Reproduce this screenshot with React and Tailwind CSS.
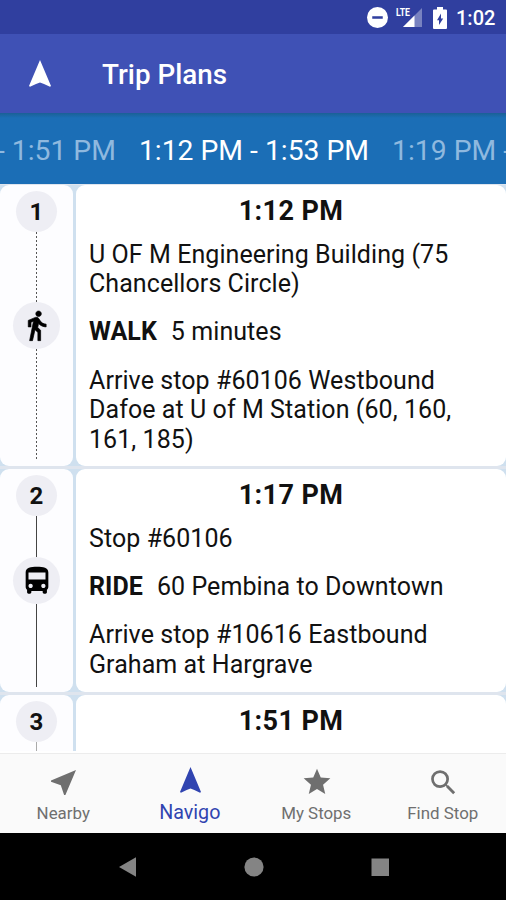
import { MdStar, MdSearch } from "react-icons/md";

function Arrow({ className }) {
  return (
    <svg viewBox="0 0 22 27" className={className} fill="currentColor">
      <path d="M11 0L22 26l-1 .8L15 24 11 22.400 7 24 1 26.800 0 26z" />
    </svg>
  );
}

function NearArrow({ className }) {
  return (
    <svg viewBox="0 0 25 25" className={className} fill="currentColor">
      <path d="M25 0L14.4 25h-1.3L9.8 15.200 0 11.800v-1.300z" />
    </svg>
  );
}

function WalkIcon() {
  return (
    <svg viewBox="0 0 24 24" className="h-[33px] w-[33px]" fill="currentColor" stroke="currentColor" strokeWidth="0.5">
      <path d="M13.5 5.5c1.1 0 2-.9 2-2s-.9-2-2-2-2 .9-2 2 .9 2 2 2zM9.8 8.900L7 23h2.100l1.800-8 2.100 2v6h2v-7.500l-2.100-2 .6-3C14.800 12 16.800 13 19 13v-2c-1.900 0-3.500-1-4.300-2.400l-1-1.600c-.4-.6-1-1-1.700-1-.3 0-.5.1-.8.1L6 8.300V13h2V9.600l1.800-.7z" />
    </svg>
  );
}

function BusIcon() {
  return (
    <svg viewBox="0 0 24 24" className="h-[34px] w-[34px]" fill="currentColor">
      <path d="M4 16c0 .88.39 1.67 1 2.220V20c0 .55.45 1 1 1h1c.55 0 1-.45 1-1v-1h8v1c0 .55.45 1 1 1h1c.55 0 1-.45 1-1v-1.780c.61-.55 1-1.340 1-2.220V6c0-3.500-3.580-4-8-4s-8 .5-8 4v10zm3.500 1c-.83 0-1.500-.67-1.500-1.500S6.670 14 7.500 14s1.500.67 1.500 1.500S8.330 17 7.500 17zm9 0c-.83 0-1.500-.67-1.500-1.500s.67-1.500 1.500-1.500 1.500.67 1.500 1.500-.67 1.500-1.500 1.500zm1.500-6H6V6h12v5z" />
    </svg>
  );
}

function StatusBar() {
  return (
    <div className="flex h-[34px] shrink-0 items-center bg-[#303f9f] pt-px pl-[367px] text-white">
      <svg viewBox="0 0 20 20" className="h-[21px] w-[21px] shrink-0">
        <circle cx="10" cy="10" r="10" fill="#fff" />
        <rect x="5" y="8.8" width="10" height="2.4" fill="#303f9f" />
      </svg>
      <svg viewBox="0 0 27 21" className="ml-[8px] h-[21px] w-[27px] shrink-0 overflow-visible">
        <path d="M26 1v19H7z" fill="#fff" opacity=".35" />
        <path d="M18.500 8.500v11.500H7z" fill="#fff" />
        <rect x="0" y="0" width="14.500" height="10" fill="#303f9f" />
        <text x="0" y="9" fontFamily="Roboto" fontWeight="700" fontSize="11.500" textLength="14" lengthAdjust="spacingAndGlyphs" fill="#fff">LTE</text>
      </svg>
      <svg viewBox="0 0 14 22" className="ml-[10px] h-[22px] w-[14px] shrink-0">
        <path d="M4 0h6v2.500h3a1 1 0 0 1 1 1V21a1 1 0 0 1-1 1H1a1 1 0 0 1-1-1V3.500a1 1 0 0 1 1-1h3z" fill="#fff" />
        <path d="M8 6.500v5h2.200L6 18v-4.800H4z" fill="#303f9f" />
      </svg>
      <span className="ml-[9px] text-[20px] leading-[24px] font-medium whitespace-nowrap">1:02</span>
    </div>
  );
}

function Step({ number, time, icon, dashed, height, children }) {
  const line = dashed
    ? "bg-[repeating-linear-gradient(to_bottom,#555_0_2px,transparent_2px_4px)]"
    : icon
      ? "bg-[#444]"
      : "bg-[#aaa]";
  return (
    <div className={`flex shrink-0 gap-[3px] bg-[#cfe0ef] ${height}`}>
      <div className="flex w-[73px] shrink-0 flex-col items-center rounded-[9px] bg-[#fdfdff] pt-[6px] pb-[5px]">
        <div className="flex h-[41px] w-[41px] shrink-0 items-center justify-center rounded-full bg-[#eeeef4] pt-px text-[24px] font-bold">{number}</div>
        <div className={`w-px flex-1 ${line}`} />
        {icon && (
          <>
            <div className="flex h-[47px] w-[47px] shrink-0 items-center justify-center rounded-full bg-[#eeeef4] text-black">
              {icon}
            </div>
            <div className={`w-px ${line} ${dashed ? "h-[112px]" : "h-[83px]"}`} />
          </>
        )}
      </div>
      <div className="min-w-0 flex-1 rounded-[9px] bg-white pt-[10px] pl-[13px]">
        <h2 className="mb-[12.6px] pr-[13px] text-center text-[27px] leading-[32px] font-bold tracking-[0.4px]">{time}</h2>
        <div className="flex flex-col gap-[19px] text-[25px] leading-[29.4px] tracking-[0.07px] whitespace-nowrap">{children}</div>
      </div>
    </div>
  );
}

function NavItem({ icon, label, active }) {
  return (
    <div className={`flex flex-1 flex-col items-center pt-[12px] ${active ? "text-[#3044b0]" : "text-[#6f6f6f]"}`}>
      <div className="flex h-[32px] items-center justify-center pl-px">{icon}</div>
      <span className={`whitespace-nowrap leading-[24px] ${active ? "mt-[3px] text-[19.7px]" : "mt-[3px] text-[16.9px]"}`}>{label}</span>
    </div>
  );
}

export default function App() {
  return (
    <div className="flex h-[900px] w-[506px] flex-col overflow-hidden bg-black font-['Roboto',sans-serif] text-[#111]">
      <StatusBar />
      <header className="flex h-[79px] shrink-0 items-center bg-[#3f51b5] pl-[29px] text-white">
        <Arrow className="h-[27px] w-[22px]" />
        <h1 className="mt-[2px] ml-[51px] text-[27.8px] leading-[32px] font-medium">Trip Plans</h1>
      </header>
      <div className="flex h-[71px] shrink-0 items-center justify-center gap-[23px] bg-[#1b6eb6] bg-linear-to-b from-[#1a6096] to-[#1b6eb6] to-[5px] pt-[5px] pl-[2px] text-[28.3px] whitespace-nowrap text-[#8fb9df]">
        <span>- 1:51 PM</span>
        <span className="text-white">1:12 PM - 1:53 PM</span>
        <span>1:19 PM -</span>
      </div>
      <main className="flex min-h-0 flex-1 flex-col gap-[3px] overflow-hidden bg-[#dfe5ee] pt-px">
        <Step number="1" time="1:12 PM" icon={<WalkIcon />} dashed height="h-[281px]">
          <p>U OF M Engineering Building (75<br />Chancellors Circle)</p>
          <p><b className="mr-[14px]">WALK</b>5 minutes</p>
          <p>Arrive stop #60106 Westbound<br />Dafoe at U of M Station (60, 160,<br />161, 185)</p>
        </Step>
        <Step number="2" time="1:17 PM" icon={<BusIcon />} height="h-[223px]">
          <p>Stop #60106</p>
          <p><b className="mr-[14px]">RIDE</b>60 Pembina to Downtown</p>
          <p>Arrive stop #10616 Eastbound<br />Graham at Hargrave</p>
        </Step>
        <Step number="3" time="1:51 PM" height="h-[220px]" />
      </main>
      <div className="h-[2px] shrink-0 bg-white" />
      <nav className="flex h-[80px] shrink-0 border-t border-[#ececec] bg-[#fafafa]">
        <NavItem icon={<NearArrow className="h-[25px] w-[25px]" />} label="Nearby" />
        <NavItem active icon={<Arrow className="mb-[4px] h-[26px] w-[21px]" />} label="Navigo" />
        <NavItem icon={<MdStar className="h-[32px] w-[32px]" />} label="My Stops" />
        <NavItem icon={<MdSearch className="h-[33px] w-[33px]" />} label="Find Stop" />
      </nav>
      <div className="flex h-[67px] shrink-0 items-center justify-center bg-black">
        <svg viewBox="0 0 271 20" className="h-[20px] w-[271px]" fill="#848484">
          <path d="M18 0.300v19.400L1 10z" />
          <circle cx="136" cy="10" r="9.600" />
          <rect x="253.500" y="1.500" width="17.500" height="17.500" />
        </svg>
      </div>
    </div>
  );
}
